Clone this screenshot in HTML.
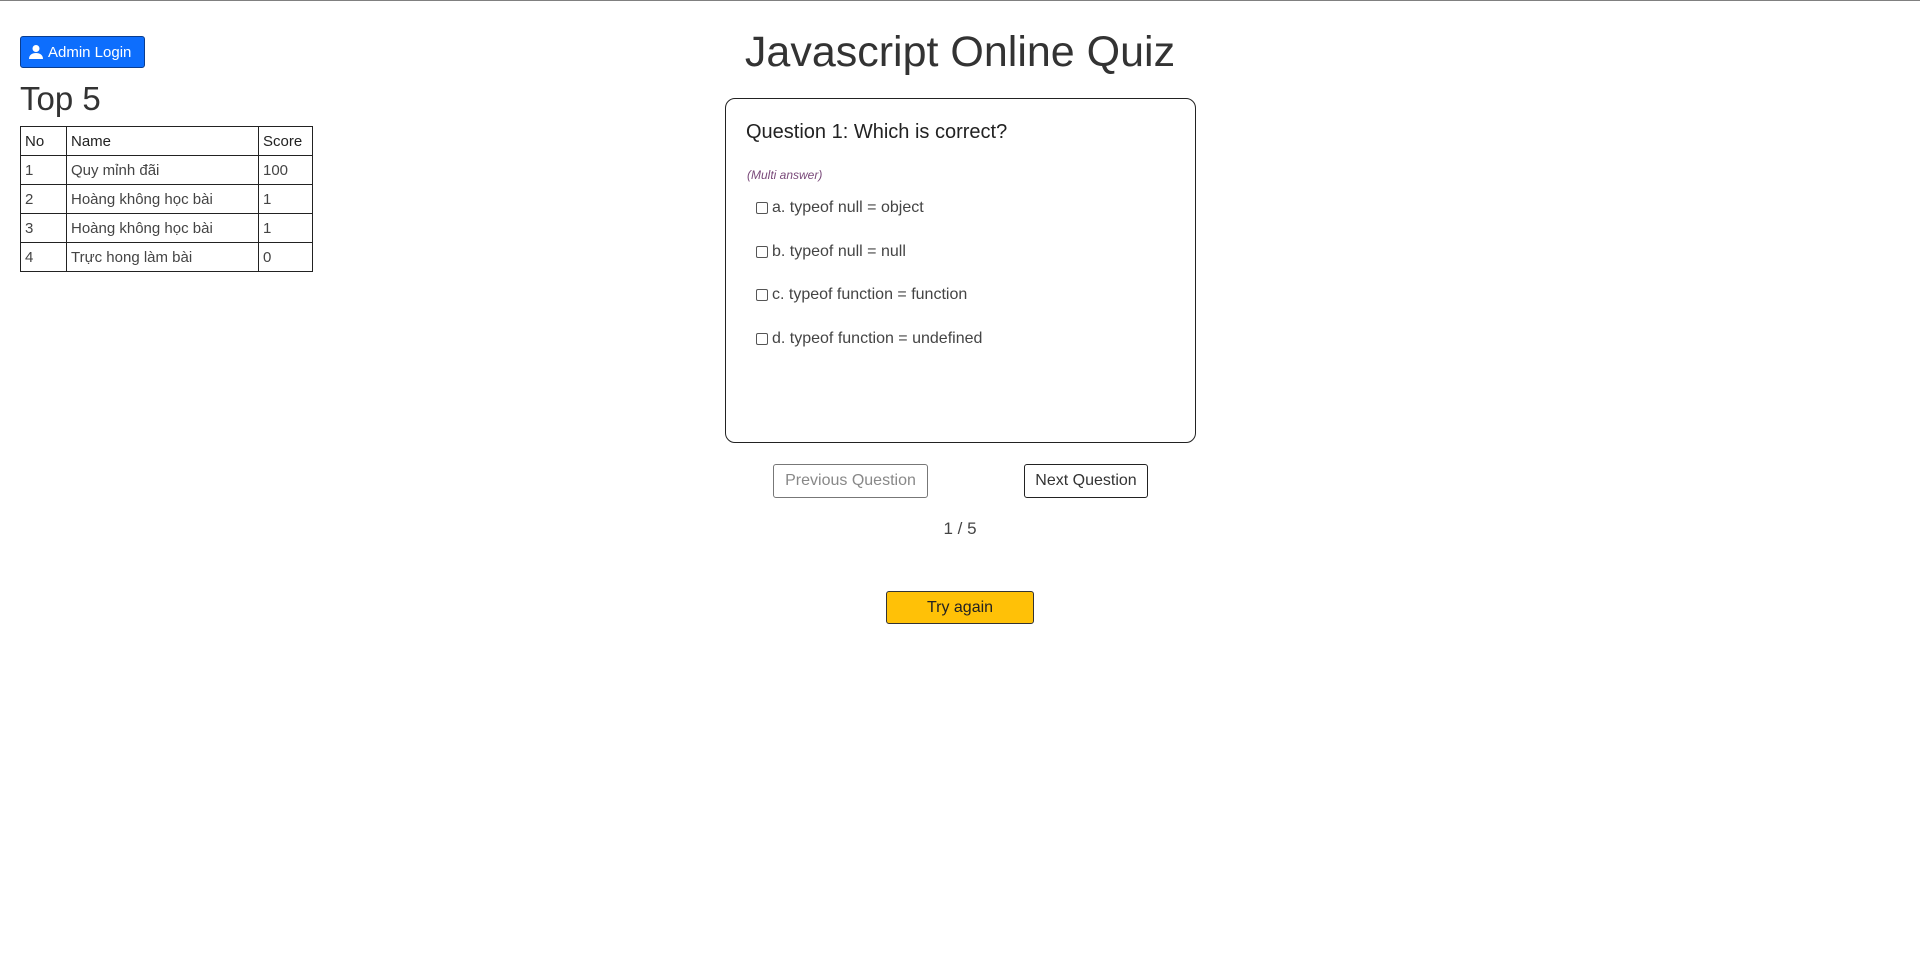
<!DOCTYPE html>
<html><head><meta charset="utf-8">
<style>
*{box-sizing:border-box;margin:0;padding:0}
html,body{width:1920px;height:955px;background:#fff;overflow:hidden;font-family:"Liberation Sans","Noto Sans CJK SC",sans-serif;color:#212529}
.topline{position:absolute;left:0;top:0;width:1920px;height:1px;background:#808080}
.admin{position:absolute;left:20px;top:36px;width:125px;height:32px;background:#0d6efd;border:1px solid #0a3d8f;border-radius:3px;color:#fff;font-size:15px;display:flex;align-items:center;padding-left:7px;gap:4px}
.top5{position:absolute;left:20px;top:80px;font-size:33px;color:#333}
table{position:absolute;left:20px;top:126px;border-collapse:collapse;font-size:15px;table-layout:fixed;width:292px}
td,th{border:1px solid #222;height:29px;padding:0 4px;text-align:left;font-weight:normal;color:#444}
th{color:#222}
.title{position:absolute;left:700px;width:520px;top:28px;text-align:center;font-size:43px;color:#333}
.box{position:absolute;left:725px;top:98px;width:471px;height:345px;border:1px solid #222;border-radius:10px}
.q{position:absolute;left:746px;top:121px;font-size:20px;color:#222}
.multi{position:absolute;left:747px;top:168px;font-size:12px;font-style:italic;color:#7a4a7a}
.opt{position:absolute;left:756px;font-size:16px;color:#444;display:flex;align-items:center}
.cb{width:12px;height:12px;border:1px solid #555;border-radius:2px;margin-right:4px}
.btn{position:absolute;top:464px;height:34px;border:1px solid #222;border-radius:3px;font-size:16px;display:flex;align-items:center;justify-content:center;color:#333}
.cnt{position:absolute;left:900px;width:120px;top:519px;text-align:center;font-size:17px;color:#444}
.try{position:absolute;left:886px;top:591px;width:148px;height:33px;background:#ffc107;border:1px solid #333;border-radius:3px;font-size:16px;display:flex;align-items:center;justify-content:center;color:#222}
</style></head><body>
<div class="topline"></div>
<div class="admin"><svg width="16" height="16" viewBox="0 0 16 16"><circle cx="8" cy="4.5" r="3.5" fill="#fff"/><path d="M1 15c0-4 3-6 7-6s7 2 7 6z" fill="#fff"/></svg>Admin Login</div>
<div class="top5">Top 5</div>
<table>
<tr><th style="width:46px">No</th><th style="width:192px">Name</th><th style="width:54px">Score</th></tr>
<tr><td>1</td><td>Quy mỉnh đãi</td><td>100</td></tr>
<tr><td>2</td><td>Hoàng không học bài</td><td>1</td></tr>
<tr><td>3</td><td>Hoàng không học bài</td><td>1</td></tr>
<tr><td>4</td><td>Trực hong làm bài</td><td>0</td></tr>
</table>
<div class="title">Javascript Online Quiz</div>
<div class="box"></div>
<div class="q">Question 1: Which is correct?</div>
<div class="multi">(Multi answer)</div>
<div class="opt" style="top:199px"><span class="cb"></span>a. typeof null = object</div>
<div class="opt" style="top:243px"><span class="cb"></span>b. typeof null = null</div>
<div class="opt" style="top:286px"><span class="cb"></span>c. typeof function = function</div>
<div class="opt" style="top:330px"><span class="cb"></span>d. typeof function = undefined</div>
<div class="btn" style="left:773px;width:155px;border-color:#777;color:#888">Previous Question</div>
<div class="btn" style="left:1024px;width:124px">Next Question</div>
<div class="cnt">1 / 5</div>
<div class="try">Try again</div>
</body></html>
